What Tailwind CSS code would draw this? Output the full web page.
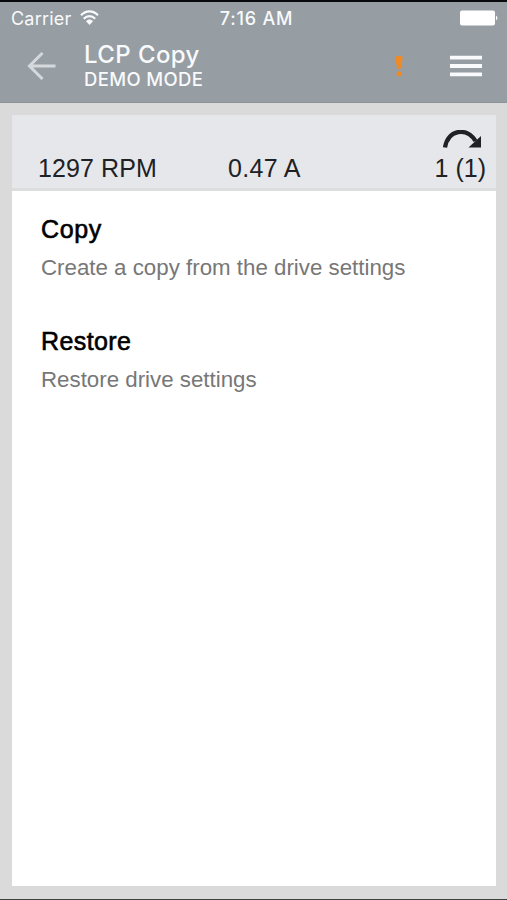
<!DOCTYPE html>
<html lang="en">
<head>
<meta charset="utf-8">
<title>LCP Copy</title>
<script src="https://cdn.jsdelivr.net/npm/@tailwindcss/browser@4"></script>
</head>
<body class="h-[900px] w-[507px] overflow-hidden bg-[#dadada] font-['Liberation_Sans',Arial,sans-serif]">
<div class="flex h-full flex-col border-t-2 border-b border-t-[#08090c] border-b-[#404040]">
  <header class="h-[101px] shrink-0 border-b border-[#8b9196] bg-[#969da3] font-['Inter',sans-serif] text-[#f8fafc]">
    <div class="grid h-[33px] grid-cols-3 items-center pr-[9px] pl-[11px]">
      <div class="flex items-center gap-[9px]">
        <span class="text-[18px] leading-8 tracking-[0.2px]">Carrier</span>
        <svg class="mb-[3px] h-[15px] w-[19px]" viewBox="0 0 19 15" fill="none" stroke="currentColor" stroke-width="2.2"><path d="M1 5.2C5.8 0 13.2 0 18 5.2M3.800 8.800C7.200 5.200 11.800 5.200 15.200 8.800"/><path d="M6 11.200C8 9 11 9 13 11.200L9.500 14.900Z" fill="currentColor" stroke="none"/></svg>
      </div>
      <span class="ml-1 text-center text-[18px] leading-8 font-medium tracking-[0.800px] whitespace-nowrap">7:16 AM</span>
      <svg class="mb-[2px] h-4 w-[39px] justify-self-end" viewBox="0 0 39 16" fill="#fff"><rect x="1" y=".5" width="35" height="15" rx="2"/><path d="M37 5.500Q40 8 37 10.500Z"/></svg>
    </div>
    <div class="flex h-[62px] items-center pr-[25px] pl-[27px]">
      <svg class="h-7 w-[29px] text-[#d5d9dc]" viewBox="0 0 29 28" fill="none" stroke="currentColor" stroke-width="3"><path d="M28.500 14H3M15.500 1L2.500 14L15.500 27"/></svg>
      <div class="mt-[2px] ml-7 flex-1">
        <div class="text-[24px] leading-[25px] font-medium tracking-[0.400px]">LCP Copy</div>
        <div class="text-[18.500px] leading-[25px] font-medium tracking-[0.350px]">DEMO MODE</div>
      </div>
      <svg class="mr-[47px] h-[22px] w-2 text-[#f08a24]" viewBox="0 0 8 22" fill="currentColor"><path d="M.3 3Q.3 .8 4 .8Q7.700 .8 7.700 3L5.800 13.500Q4 14.800 2.200 13.500Z"/><ellipse cx="4" cy="18.700" rx="2.500" ry="2.500"/></svg>
      <svg class="h-[22px] w-8" viewBox="0 0 32 22" fill="currentColor"><path d="M0 .8h32v3.800H0zM0 9.100h32v3.800H0zM0 17.400h32v3.800H0z"/></svg>
    </div>
  </header>
  <main class="mt-[12px] mr-[11px] mb-[13px] ml-3 flex flex-1 flex-col bg-white">
    <section class="flex h-[76px] shrink-0 items-end border-b-[3px] border-[#dcdddd] bg-[#e5e7ea] pr-[10px] pb-[5px] pl-[26px] text-[25px] leading-[30px] text-[#202124]">
      <span class="w-[190px] tracking-[0.100px]">1297 RPM</span>
      <span class="flex-1 tracking-[0.300px]">0.47 A</span>
      <div class="flex flex-col items-end">
        <svg class="mr-[5px] h-[18px] w-[38px]" viewBox="0 0 38 18" fill="none"><path d="M2 17.500C5 -1 24 -3 32.500 11" stroke="currentColor" stroke-width="4.300"/><path d="M38 6V17.500H25.500Z" fill="currentColor"/></svg>
        <span class="mt-[5px]">1 (1)</span>
      </div>
    </section>
    <section class="pt-[22px] pl-[29px]">
      <h2 class="text-[25px] leading-[32px] tracking-[0.600px] text-black [-webkit-text-stroke:0.600px_black]">Copy</h2>
      <p class="mt-[9px] text-[22.300px] leading-7 text-[#777777]">Create a copy from the drive settings</p>
    </section>
    <section class="pt-[43px] pl-[29px]">
      <h2 class="text-[25px] leading-[32px] tracking-[0.400px] text-black [-webkit-text-stroke:0.600px_black]">Restore</h2>
      <p class="mt-[9px] text-[22.300px] leading-7 text-[#777777]">Restore drive settings</p>
    </section>
  </main>
</div>
</body>
</html>
